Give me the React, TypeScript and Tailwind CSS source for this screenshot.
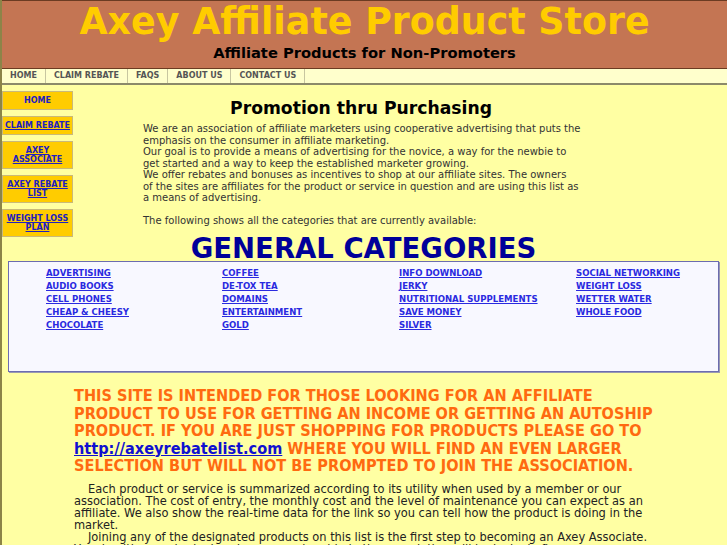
const nav = ['HOME', 'CLAIM REBATE', 'FAQS', 'ABOUT US', 'CONTACT US'];

const side = [
  { label: 'HOME', plain: true, h: 'h-[19px]' },
  { label: 'CLAIM REBATE', h: 'h-[19px]' },
  { label: 'AXEY ASSOCIATE', h: 'h-[28px]' },
  { label: 'AXEY REBATE LIST', h: 'h-[28px]' },
  { label: 'WEIGHT LOSS PLAN', h: 'h-[28px]' },
];

const cats = [
  ['ADVERTISING', 'AUDIO BOOKS', 'CELL PHONES', 'CHEAP & CHEESY', 'CHOCOLATE'],
  ['COFFEE', 'DE-TOX TEA', 'DOMAINS', 'ENTERTAINMENT', 'GOLD'],
  ['INFO DOWNLOAD', 'JERKY', 'NUTRITIONAL SUPPLEMENTS', 'SAVE MONEY', 'SILVER'],
  ['SOCIAL NETWORKING', 'WEIGHT LOSS', 'WETTER WATER', 'WHOLE FOOD'],
];

export default function App() {
  return (
    <div className="min-h-[545px] bg-[#ffffa3] border-l-2 border-[#8c8448] font-['DejaVu_Sans',sans-serif] overflow-hidden">
      {/* header */}
      <header className="bg-[#c47553] border-t border-b border-[#6b3b22] h-[69px] flex flex-col items-center">
        <h1 className="text-[#ffcc00] font-bold text-[36.4px] leading-[42px]">Axey Affiliate Product Store</h1>
        <h2 className="text-black font-bold text-[14.7px] leading-[18px] mt-[1px]">Affiliate Products for Non-Promoters</h2>
      </header>

      {/* top nav */}
      <nav className="bg-[#ffffcc] border-b-2 border-[#8c8a6a] h-[16px] flex items-center">
        {nav.map((n) => (
          <span key={n} className="text-[8px] font-bold text-[#555555] px-[8px] border-r border-[#c8c6a0] leading-[14px]">
            {n}
          </span>
        ))}
      </nav>

      <div className="flex">
        {/* side menu */}
        <div className="w-[71px] flex flex-col gap-[6px] pt-[6px]">
          {side.map((s) => (
            <div
              key={s.label}
              className={`${s.h} bg-[#ffcc00] border border-[#c9b979] flex items-center justify-center text-center text-[8px] font-bold text-[#2020c0] leading-[9.5px]`}
            >
              <span className={s.plain ? '' : 'underline'}>{s.label}</span>
            </div>
          ))}
        </div>

        {/* intro */}
        <div className="ml-[70px] w-[440px] pt-[12px] text-[10px] leading-[11.5px] text-[#333333]">
          <h3 className="text-center font-bold text-[17.2px] leading-[22px] text-black mb-[4px] -ml-[4px]">Promotion thru Purchasing</h3>
          <p>
            We are an association of affiliate marketers using cooperative advertising that puts the emphasis on the consumer in affiliate marketing.
            <br />
            Our goal is to provide a means of advertising for the novice, a way for the newbie to get started and a way to keep the established marketer growing.
            <br />
            We offer rebates and bonuses as incentives to shop at our affiliate sites. The owners of&nbsp;the&nbsp;sites are affiliates for the product or service in question and are using this list as a&nbsp;means of advertising.
          </p>
          <p className="mt-[11.5px]">The following shows all the categories that are currently available:</p>
        </div>
      </div>

      <h2 className="text-center font-bold text-[27.5px] leading-[30px] text-[#000099] -mt-[4px] -ml-[2px]">GENERAL CATEGORIES</h2>

      {/* categories */}
      <div className="ml-[6px] w-[711px] -mt-[2px] h-[111px] bg-[#f8f8ff] border border-[#6c6cb0] shadow-[1px_1px_0_#9a9ab0] grid grid-cols-[176px_177px_177px_1fr] pl-[37px] pt-[4px]">
        {cats.map((col, i) => (
          <div key={i} className="flex flex-col">
            {col.map((c) => (
              <a key={c} className="font-['DejaVu_Sans_Condensed',sans-serif] font-bold text-[9.5px] leading-[13px] text-[#2a2ae0] underline">
                {c}
              </a>
            ))}
          </div>
        ))}
      </div>

      {/* notice */}
      <p className="ml-[72px] mr-[60px] mt-[15px] font-['DejaVu_Sans_Condensed',sans-serif] font-bold text-[16.15px] leading-[17.5px] text-[#ff6a10]">
        THIS SITE IS INTENDED FOR THOSE LOOKING FOR AN AFFILIATE PRODUCT TO USE FOR GETTING AN INCOME OR GETTING AN AUTOSHIP PRODUCT. IF YOU ARE JUST SHOPPING FOR PRODUCTS PLEASE GO TO{' '}
        <a className="text-[#1010d0] underline">http://axeyrebatelist.com</a> WHERE YOU WILL FIND AN EVEN LARGER SELECTION BUT WILL NOT BE PROMPTED TO JOIN THE ASSOCIATION.
      </p>

      <div className="ml-[72px] mr-[75px] mt-[8px] font-['DejaVu_Sans_Condensed',sans-serif] text-[12.7px] leading-[12px] text-[#222222]">
        <p className="indent-[14px]">
          Each product or service is summarized according to its utility when used by a member or our association. The cost of entry, the monthly cost and the level of maintenance you can expect as an affiliate. We also show the real-time data for the link so you can tell how the product is doing in the market.
        </p>
        <p className="indent-[14px]">
          Joining any of the designated products on this list is the first step to becoming an Axey Associate. Your health, your budget and your membership in the association will be looked after.
        </p>
      </div>
    </div>
  );
}
